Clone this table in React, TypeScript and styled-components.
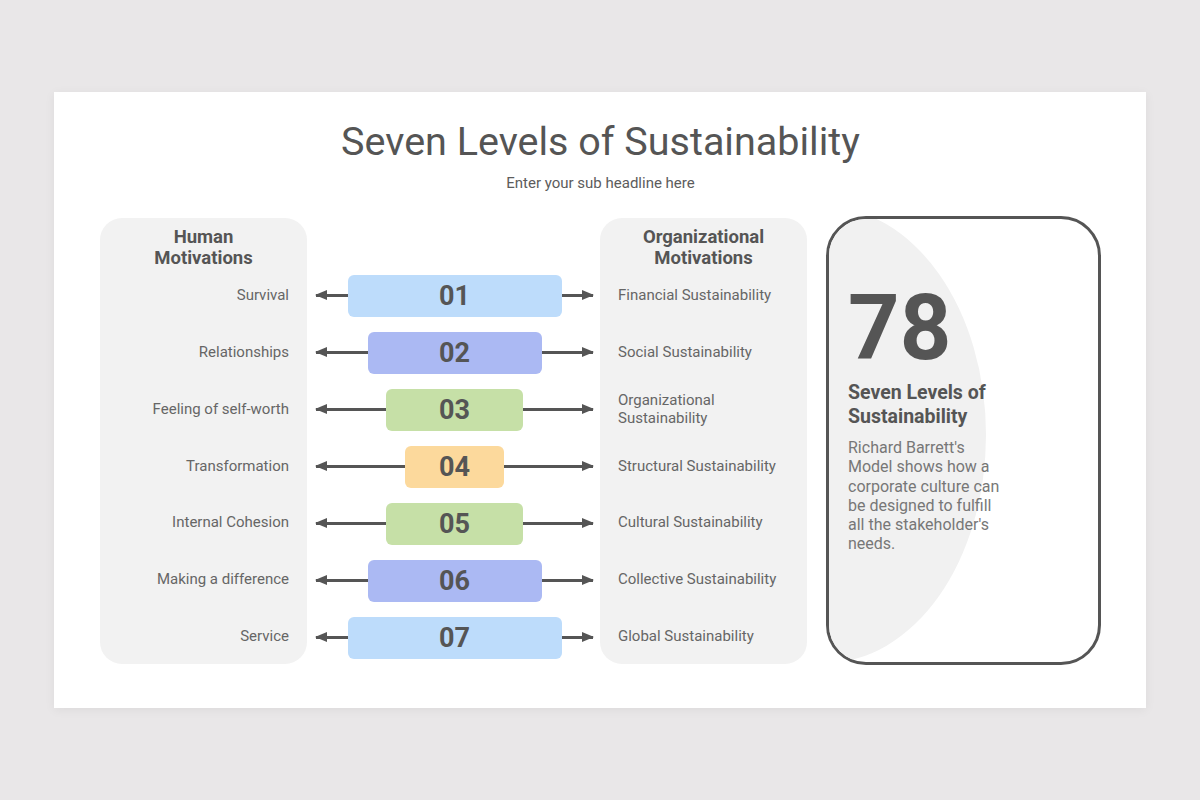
import styled, { createGlobalStyle } from 'styled-components'

const GlobalStyle = createGlobalStyle`
	html, body {
		margin: 0;
		padding: 0;
		background: #e9e7e8;
		font-family: Roboto, 'Liberation Sans', Arial, sans-serif;
		color: #555555;
	}
`

const Page = styled.main`
	display: flex;
	align-items: center;
	justify-content: center;
	width: 1200px;
	height: 800px;
`

const Slide = styled.section`
	display: flex;
	flex-direction: column;
	align-items: center;
	box-sizing: border-box;
	width: 1092px;
	height: 616px;
	padding: 26px 45px 0 46px;
	background: #ffffff;
	box-shadow: 0 2px 10px rgba(0, 0, 0, 0.06);
`

const Title = styled.h1`
	margin: 0;
	font-size: 39.5px;
	line-height: 48px;
	font-weight: 400;
	color: #555555;
`

const Subtitle = styled.p`
	margin: 7px 0 0;
	font-size: 15px;
	line-height: 20px;
	color: #5c5c5c;
`

const Board = styled.div`
	display: flex;
	align-items: flex-start;
	align-self: stretch;
	margin-top: 23px;
`

const Panel = styled.div<{ $side: 'left' | 'right' }>`
	display: flex;
	flex-direction: column;
	box-sizing: border-box;
	width: 207px;
	height: 446px;
	margin-top: 2px;
	padding-top: 9px;
	background: #f2f2f2;
	border-radius: 22px;
	text-align: ${(p) => (p.$side === 'left' ? 'right' : 'left')};
`

const PanelHeading = styled.h2`
	margin: 0;
	height: 40px;
	font-size: 18.5px;
	line-height: 21px;
	font-weight: 700;
	text-align: center;
	color: #555555;
`

const Label = styled.div<{ $side: 'left' | 'right' }>`
	display: flex;
	align-items: center;
	justify-content: ${(p) => (p.$side === 'left' ? 'flex-end' : 'flex-start')};
	height: 57px;
	padding: ${(p) => (p.$side === 'left' ? '0 18px 0 0' : '0 0 0 18px')};
	font-size: 15px;
	line-height: 18px;
	color: #666666;
`

const Middle = styled.div`
	display: flex;
	flex-direction: column;
	box-sizing: border-box;
	width: 293px;
	margin-top: 2px;
	padding: 49px 7px 0 9px;
`

const Row = styled.div`
	display: flex;
	align-items: center;
	height: 57px;
`

const Connector = styled.div<{ $dir: 'left' | 'right' }>`
	position: relative;
	flex: 1;
	height: 3px;
	background: #555555;

	&::before {
		content: '';
		position: absolute;
		top: -4px;
		${(p) => (p.$dir === 'left' ? 'left: -1px;' : 'right: -1px;')}
		border-top: 5.5px solid transparent;
		border-bottom: 5.5px solid transparent;
		${(p) =>
			p.$dir === 'left'
				? 'border-right: 12px solid #555555;'
				: 'border-left: 12px solid #555555;'}
	}
`

const Level = styled.div<{ $color: string }>`
	display: flex;
	align-items: center;
	justify-content: center;
	height: 42px;
	border-radius: 6px;
	background: ${(p) => p.$color};
	font-size: 27px;
	font-weight: 700;
	color: #555555;
`

const Card = styled.aside`
	position: relative;
	overflow: hidden;
	box-sizing: border-box;
	width: 275px;
	height: 449px;
	margin-left: 19px;
	padding: 57px 19px 0 19px;
	border: 3px solid #555555;
	border-radius: 40px;
	background: #ffffff;

	&::before {
		content: '';
		position: absolute;
		left: -165px;
		top: -12px;
		width: 322px;
		height: 456px;
		border-radius: 50%;
		background: #f1f1f1;
	}
`

const CardBody = styled.div`
	position: relative;
	width: 158px;
`

const BigNumber = styled.div`
	font-size: 90px;
	line-height: 105px;
	font-weight: 700;
	color: #555555;
`

const CardTitle = styled.h3`
	margin: 0;
	font-size: 19.5px;
	line-height: 24px;
	font-weight: 700;
	color: #555555;
`

const CardText = styled.p`
	margin: 9px 0 0;
	font-size: 16px;
	line-height: 19.3px;
	color: #777777;
`

const levels = [
	{ num: '01', width: 214, color: '#bddcfb', human: 'Survival', org: 'Financial Sustainability' },
	{ num: '02', width: 174, color: '#abb9f3', human: 'Relationships', org: 'Social Sustainability' },
	{ num: '03', width: 137, color: '#c6e0a7', human: 'Feeling of self-worth', org: 'Organizational Sustainability' },
	{ num: '04', width: 99, color: '#fcd99c', human: 'Transformation', org: 'Structural Sustainability' },
	{ num: '05', width: 137, color: '#c6e0a7', human: 'Internal Cohesion', org: 'Cultural Sustainability' },
	{ num: '06', width: 174, color: '#abb9f3', human: 'Making a difference', org: 'Collective Sustainability' },
	{ num: '07', width: 214, color: '#bddcfb', human: 'Service', org: 'Global Sustainability' },
]

export default function App() {
	return (
		<>
			<GlobalStyle />
			<Page>
				<Slide>
					<Title>Seven Levels of Sustainability</Title>
					<Subtitle>Enter your sub headline here</Subtitle>
					<Board>
						<Panel $side='left'>
							<PanelHeading>
								Human
								<br />
								Motivations
							</PanelHeading>
							{levels.map((l) => (
								<Label key={l.num} $side='left'>
									{l.human}
								</Label>
							))}
						</Panel>
						<Middle>
							{levels.map((l) => (
								<Row key={l.num}>
									<Connector $dir='left' />
									<Level $color={l.color} style={{ width: l.width }}>
										{l.num}
									</Level>
									<Connector $dir='right' />
								</Row>
							))}
						</Middle>
						<Panel $side='right'>
							<PanelHeading>
								Organizational
								<br />
								Motivations
							</PanelHeading>
							{levels.map((l) => (
								<Label key={l.num} $side='right'>
									{l.num === '03' ? (
										<span>
											Organizational
											<br />
											Sustainability
										</span>
									) : (
										l.org
									)}
								</Label>
							))}
						</Panel>
						<Card>
							<CardBody>
								<BigNumber>78</BigNumber>
								<CardTitle>
									Seven Levels of
									<br />
									Sustainability
								</CardTitle>
								<CardText>
									Richard Barrett's Model shows how a corporate culture can be designed to fulfill
									all the stakeholder's needs.
								</CardText>
							</CardBody>
						</Card>
					</Board>
				</Slide>
			</Page>
		</>
	)
}
